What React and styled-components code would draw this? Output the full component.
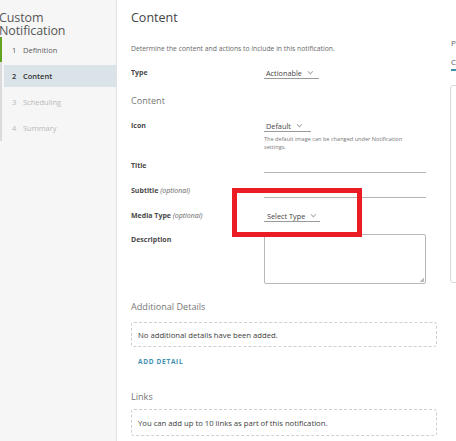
import React from "react";
import styled, { createGlobalStyle } from "styled-components";

const GlobalStyle = createGlobalStyle`
  html, body {
    margin: 0;
    padding: 0;
    background: #ffffff;
    overflow: hidden;
  }
  * {
    box-sizing: border-box;
    font-family: "Open Sans", "Liberation Sans", sans-serif;
  }
`;

const steps = [
  { num: 1, label: "Definition", state: "done" },
  { num: 2, label: "Content", state: "active" },
  { num: 3, label: "Scheduling", state: "todo" },
  { num: 4, label: "Summary", state: "todo" },
];

const App = () => {
  return (
    <>
      <GlobalStyle />
      <Page>
        <Sidebar>
          <WizardTitle>
            Custom
            <br />
            Notification
          </WizardTitle>
          <StepList>
            {steps.map((s) => (
              <Step key={s.num} $state={s.state}>
                <StepNum>{s.num}</StepNum>
                {s.label}
              </Step>
            ))}
          </StepList>
        </Sidebar>

        <Main>
          <PageTitle>Content</PageTitle>
          <Intro>Determine the content and actions to include in this notification.</Intro>

          <FormRow $top={14}>
            <Label>Type</Label>
            <Dropdown $width={55}>Actionable</Dropdown>
          </FormRow>

          <SectionHeading $top={16}>Content</SectionHeading>

          <FormRow $top={15}>
            <Label>Icon</Label>
            <div>
              <Dropdown $width={47}>Default</Dropdown>
              <Help>The default image can be changed under Notification settings.</Help>
            </div>
          </FormRow>

          <FormRow $top={10}>
            <Label>Title</Label>
            <TextLine />
          </FormRow>

          <FormRow $top={13}>
            <Label>
              Subtitle <Optional>(optional)</Optional>
            </Label>
            <TextLine />
          </FormRow>

          <FormRow $top={13}>
            <Label>
              Media Type <Optional>(optional)</Optional>
            </Label>
            <Dropdown $width={56} $pad={3}>Select Type</Dropdown>
          </FormRow>

          <FormRow $top={12}>
            <Label $pt={1}>Description</Label>
            <TextArea />
          </FormRow>

          <SectionHeading $top={17}>Additional Details</SectionHeading>
          <EmptyBox $top={10} $height={25}>No additional details have been added.</EmptyBox>
          <LinkButton>ADD DETAIL</LinkButton>

          <SectionHeading $top={25}>Links</SectionHeading>
          <EmptyBox $top={7} $height={27}>You can add up to 10 links as part of this notification.</EmptyBox>

          <Highlight />
        </Main>

        <Preview>
          <PreviewTitle>Preview</PreviewTitle>
          <PreviewTab>Card</PreviewTab>
          <PreviewCard />
        </Preview>
      </Page>
    </>
  );
};

export default App;

const Page = styled.div`
  display: flex;
  width: 456px;
  height: 441px;
  overflow: hidden;
  position: relative;
`;

const Sidebar = styled.div`
  width: 117px;
  flex-shrink: 0;
  height: 100%;
  background: #f6f6f6;
  border-right: 1px solid #e2e2e2;
  padding-top: 11px;
`;

const WizardTitle = styled.div`
  font-size: 12.5px;
  line-height: 13px;
  color: #565656;
  font-weight: 400;
  margin-left: -1px;
  letter-spacing: -0.1px;
`;

const StepList = styled.div`
  margin-top: 0;
  border-left: 2px solid #dadada;
  display: flex;
  flex-direction: column;
  gap: 4px;
  height: 104px;
  position: relative;

  &::before {
    content: "";
    position: absolute;
    left: -2px;
    top: 0;
    width: 2px;
    height: 25px;
    background: #62a420;
  }
`;

const Step = styled.div`
  height: 22px;
  flex-shrink: 0;
  display: flex;
  align-items: center;
  margin-left: 2px;
  padding-left: 8px;
  font-size: 7.5px;
  color: ${(p) => (p.$state === "todo" ? "#b8b8b8" : p.$state === "active" ? "#313131" : "#5c5c5c")};
  font-weight: ${(p) => (p.$state === "active" ? 600 : 400)};
  background: ${(p) => (p.$state === "active" ? "#dae3e8" : "transparent")};
  &:first-child {
    margin-top: 2px;
  }
`;

const StepNum = styled.span`
  width: 11px;
`;

const Main = styled.div`
  width: 321px;
  flex-shrink: 0;
  padding: 10px 0 0 14px;
  position: relative;
`;

const PageTitle = styled.div`
  font-size: 12.5px;
  color: #444;
  line-height: 16px;
`;

const Intro = styled.div`
  margin-top: 18px;
  font-size: 6.8px;
  color: #6a6a6a;
  line-height: 10px;
`;

const FormRow = styled.div`
  display: grid;
  grid-template-columns: 133px 162px;
  margin-top: ${(p) => p.$top}px;
`;

const Label = styled.div`
  font-size: 7px;
  font-weight: 700;
  color: #4a4a4a;
  line-height: 10px;
  padding-top: ${(p) => p.$pt || 0}px;
`;

const Optional = styled.span`
  font-weight: 400;
  font-style: italic;
  color: #666;
`;

const Dropdown = styled.div`
  width: ${(p) => p.$width}px;
  height: 11px;
  border-bottom: 1px solid #9a9a9a;
  font-size: 7.3px;
  color: #444;
  line-height: 9px;
  padding-left: ${(p) => p.$pad || 2}px;
  display: flex;
  align-items: center;
  gap: 5px;

  &::after {
    content: "";
    width: 3px;
    height: 3px;
    border-right: 1px solid #aaa;
    border-bottom: 1px solid #aaa;
    transform: rotate(45deg) translateY(-2px);
  }
`;

const Help = styled.div`
  margin-top: 4px;
  font-size: 5.6px;
  line-height: 7.5px;
  color: #777;
  width: 152px;
`;

const TextLine = styled.div`
  height: 12px;
  border-bottom: 1px solid #b4b4b4;
`;

const TextArea = styled.div`
  height: 50px;
  border: 1px solid #b8b8b8;
  border-radius: 2px;
  position: relative;

  &::after {
    content: "";
    position: absolute;
    right: 1px;
    bottom: 1px;
    width: 4px;
    height: 4px;
    background: linear-gradient(135deg, transparent 50%, #bbb 50%);
  }
`;

const SectionHeading = styled.div`
  margin-top: ${(p) => p.$top}px;
  font-size: 9.1px;
  color: #777;
  line-height: 11px;
`;

const EmptyBox = styled.div`
  margin-top: ${(p) => p.$top}px;
  width: 306px;
  height: ${(p) => p.$height}px;
  border: 1px dashed #cfcfcf;
  border-radius: 3px;
  padding-left: 6px;
  display: flex;
  align-items: center;
  font-size: 7.7px;
  color: #3c3c3c;
`;

const LinkButton = styled.div`
  margin-top: 10px;
  margin-left: 7px;
  font-size: 6.5px;
  font-weight: 700;
  letter-spacing: 0.7px;
  color: #4290b0;
  line-height: 9px;
`;

const Highlight = styled.div`
  position: absolute;
  left: 115px;
  top: 188px;
  width: 130px;
  height: 49px;
  border: 5px solid #ec1c24;
  pointer-events: none;
`;

const Preview = styled.div`
  flex: 1;
  padding: 38px 0 0 13px;
  overflow: hidden;
  white-space: nowrap;
`;

const PreviewTitle = styled.div`
  font-size: 8px;
  color: #666;
  line-height: 10px;
`;

const PreviewTab = styled.div`
  margin-top: 9px;
  font-size: 8px;
  color: #555;
  line-height: 10px;
  padding-bottom: 2px;
  border-bottom: 2px solid #3f8fb4;
  width: 22px;
`;

const PreviewCard = styled.div`
  margin-top: 14px;
  margin-left: -1px;
  width: 120px;
  height: 198px;
  border: 1px solid #d8d8d8;
  border-radius: 3px;
`;
